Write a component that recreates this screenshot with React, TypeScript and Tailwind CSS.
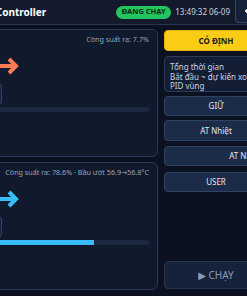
import { ArrowLeft } from 'lucide-react'

function FlowArrow({ color }: { color: string }) {
  return (
    <svg width="60" height="18" viewBox="0 0 60 18" className="block">
      <path d="M0 9h57" stroke={color} strokeWidth="4" fill="none" />
      <path d="M50 2l7 7-7 7" stroke={color} strokeWidth="4" fill="none" strokeLinejoin="miter" />
    </svg>
  )
}

function ZoneCard({ label, color, pct }: { label: string; color: string; pct: number }) {
  return (
    <div className="h-[128px] rounded-md border border-[#2a3a58] bg-[#111a2d] pl-[10px] pr-[8px] pt-[3px] flex flex-col">
      <div className="text-right text-[7.2px] leading-[12px] text-[#94a3b8] whitespace-nowrap">{label}</div>
      <div className="mt-[12px] flex items-center justify-end pr-[130px]">
        <FlowArrow color={color} />
      </div>
      <div className="mt-[8px] h-[22px] w-[60px] ml-[48px] rounded border border-[#33466a] bg-[#14203a]" />
      <div className="mt-[2px] h-[5px] rounded-full bg-[#1b2740] overflow-hidden">
        <div className="h-full" style={{ width: `${pct}%`, background: color }} />
      </div>
    </div>
  )
}

export default function App() {
  const btn =
    'h-[20px] rounded border border-[#2f4266] bg-[#1c2b47] text-[8px] text-[#e2e8f0] flex items-center justify-center'
  return (
    <div className="w-[247px] h-[296px] overflow-hidden bg-[#0b1120] font-['Noto_Sans','DejaVu_Sans',sans-serif]">
      <div className="-ml-[125px] w-[400px]">
        <div className="h-[25px] border-b border-[#2a3650] bg-[#121a2c] flex items-center pl-[8px]">
          <div className="flex-1 text-right pr-[70px] text-[10px] font-bold text-white whitespace-nowrap">Lò Sấy Controller</div>
          <div className="h-[13px] w-[55px] rounded-full bg-[#22c55e] text-[7.5px] font-bold text-[#062b14] flex items-center justify-center whitespace-nowrap">
            ĐANG CHẠY
          </div>
          <div className="ml-[4px] text-[8px] text-[#cbd5e1] whitespace-nowrap">13:49:32 06-09</div>
          <div className="ml-[5px] self-start h-[23px] w-[30px] rounded-b border border-t-0 border-[#33466a] bg-[#16213a] flex items-center justify-center text-white">
            <ArrowLeft size={14} strokeWidth={3} />
          </div>
          <div className="w-[10px]" />
        </div>
        <div className="pt-[4px] pl-[8px] flex gap-[6px]">
          <div className="w-[275px] flex flex-col gap-[5px]">
            <ZoneCard label="Công suất ra: 7.7%" color="#fb7a56" pct={7.7} />
            <ZoneCard label="Công suất ra: 78.6% · Bầu ướt 56.9→56.8°C" color="#38bdf8" pct={78.6} />
          </div>
          <div className="w-[104px] h-[260px] flex flex-col pt-[1px]">
            <div className="h-[21px] rounded border border-[#eab308] bg-[#facc15] text-[8px] font-bold text-[#1a1a1a] flex items-center justify-center">
              CÓ ĐỊNH
            </div>
            <div className="mt-[5px] h-[36px] rounded border border-[#2a3a58] bg-[#131d33] px-[5px] pt-[5px] text-[8px] leading-[9.5px] text-[#cbd5e1] whitespace-nowrap overflow-hidden">
              <div>Tổng thời gian</div>
              <div>Bắt đầu ~ dự kiến xong</div>
              <div>PID vùng</div>
            </div>
            <div className={`mt-[4px] ${btn}`}>GIỮ</div>
            <div className={`mt-[4px] h-[21px] ${btn}`}>AT Nhiệt</div>
            <div className={`mt-[5px] w-[176px] ${btn}`}>AT Nhiệt ẩm</div>
            <div className={`mt-[6px] ${btn} text-[7px]`}>USER</div>
            <div className="flex-1" />
            <div className="h-[28px] rounded border border-[#26364f] bg-[#16213a] text-[10px] text-[#8b9bb5] flex items-center justify-center">
              ▶ CHẠY
            </div>
          </div>
        </div>
      </div>
    </div>
  )
}
